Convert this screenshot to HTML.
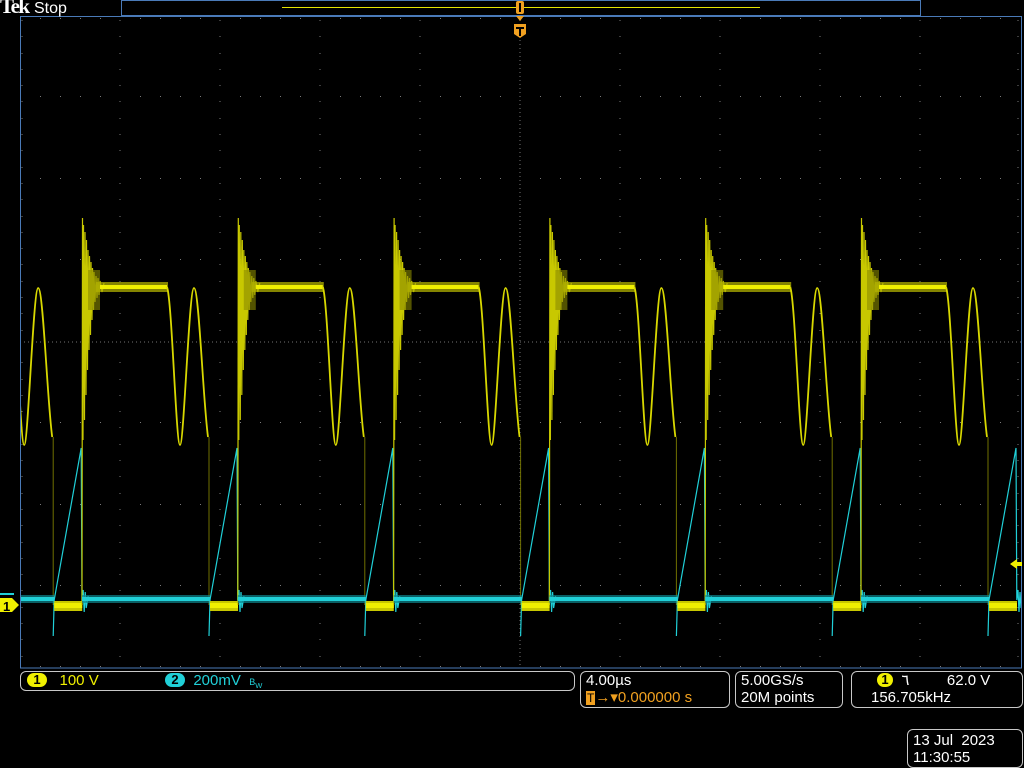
<!DOCTYPE html>
<html><head><meta charset="utf-8"><style>
html,body{margin:0;padding:0;background:#000;width:1024px;height:768px;overflow:hidden;font-family:"Liberation Sans",sans-serif}
.t{position:absolute;font-size:15px;white-space:pre;line-height:17px}
.box{position:absolute;border:1px solid #c8c8c8;border-radius:6px}
.badge{display:inline-block;width:20px;height:14px;border-radius:7px;color:#000;text-align:center;font-size:13px;line-height:14px;font-weight:bold;vertical-align:1px}
</style></head><body>
<svg width="1024" height="768" style="position:absolute;left:0;top:0">
<defs>
<clipPath id="c"><rect x="21" y="17" width="1000" height="651"/></clipPath>
<g id="per">
 <polyline fill="none" stroke="#c8c800" stroke-width="1.2" points="0,605 0.5,218 1,440 1.5,225 2.5,420 3,232 4,395 4.5,240 5.5,370 6,250 7,350 7.5,256 8.5,335 9,262 10,320 10.5,268 11.5,310 12,272 13,302 14,276 15,298 16,278 17,295 18,281 20,292 22,283"/>
 <rect x="6" y="270" width="12" height="40" fill="#8a8a00" opacity="0.6"/>
 <rect x="14" y="282" width="72" height="10" fill="#b0b000" opacity="0.75"/>
 <rect x="18" y="285" width="67" height="4" fill="#f0f000"/>
 <path d="M85,287 C90,300 94,445 98,445 C102,445 107,288 112,288 C117,288 121,400 126,437" fill="none" stroke="#d8d800" stroke-width="1.8"/>
 <line x1="127" y1="437" x2="127" y2="605" stroke="#707000" stroke-width="1"/>
 <rect x="0" y="595" width="128" height="8" fill="#0e8890" opacity="0.7"/>
 <rect x="0" y="597" width="128" height="4" fill="#20d0d8"/>
 <polyline fill="none" stroke="#20d0d8" stroke-width="1.2" points="127,636 128,600 155,448 155.8,600 157,590 158,612 159,592 160,608 162,596"/>
 <rect x="128" y="601" width="28" height="10" fill="#c8c800"/>
 <rect x="128" y="603" width="28" height="5" fill="#f0f000"/>
</g>
</defs>
<g stroke="#808080" stroke-width="1" stroke-dasharray="1 3" opacity="0.9">
 <line x1="20" y1="342" x2="1021" y2="342"/>
 <line x1="520" y1="16" x2="520" y2="668"/>
</g>
<g fill="#7a7a7a">
 <path id="vd" d="M119.5,20h1v1h-1zM119.5,36h1v1h-1zM119.5,53h1v1h-1zM119.5,69h1v1h-1zM119.5,85h1v1h-1zM119.5,101h1v1h-1zM119.5,118h1v1h-1zM119.5,134h1v1h-1zM119.5,150h1v1h-1zM119.5,167h1v1h-1zM119.5,183h1v1h-1zM119.5,199h1v1h-1zM119.5,216h1v1h-1zM119.5,232h1v1h-1zM119.5,248h1v1h-1zM119.5,264h1v1h-1zM119.5,281h1v1h-1zM119.5,297h1v1h-1zM119.5,313h1v1h-1zM119.5,330h1v1h-1zM119.5,362h1v1h-1zM119.5,379h1v1h-1zM119.5,395h1v1h-1zM119.5,411h1v1h-1zM119.5,427h1v1h-1zM119.5,444h1v1h-1zM119.5,460h1v1h-1zM119.5,476h1v1h-1zM119.5,493h1v1h-1zM119.5,509h1v1h-1zM119.5,525h1v1h-1zM119.5,542h1v1h-1zM119.5,558h1v1h-1zM119.5,574h1v1h-1zM119.5,590h1v1h-1zM119.5,607h1v1h-1zM119.5,623h1v1h-1zM119.5,639h1v1h-1zM119.5,656h1v1h-1z"/>
 <use href="#vd" x="100"/><use href="#vd" x="200"/><use href="#vd" x="300"/><use href="#vd" x="500"/><use href="#vd" x="600"/><use href="#vd" x="700"/><use href="#vd" x="800"/><use href="#vd" x="-98"/><use href="#vd" x="898"/>
 <path id="hd" d="M40,96h1v1h-1zM60,96h1v1h-1zM80,96h1v1h-1zM100,96h1v1h-1zM140,96h1v1h-1zM160,96h1v1h-1zM180,96h1v1h-1zM200,96h1v1h-1zM240,96h1v1h-1zM260,96h1v1h-1zM280,96h1v1h-1zM300,96h1v1h-1zM340,96h1v1h-1zM360,96h1v1h-1zM380,96h1v1h-1zM400,96h1v1h-1zM440,96h1v1h-1zM460,96h1v1h-1zM480,96h1v1h-1zM500,96h1v1h-1zM540,96h1v1h-1zM560,96h1v1h-1zM580,96h1v1h-1zM600,96h1v1h-1zM640,96h1v1h-1zM660,96h1v1h-1zM680,96h1v1h-1zM700,96h1v1h-1zM740,96h1v1h-1zM760,96h1v1h-1zM780,96h1v1h-1zM800,96h1v1h-1zM840,96h1v1h-1zM860,96h1v1h-1zM880,96h1v1h-1zM900,96h1v1h-1zM940,96h1v1h-1zM960,96h1v1h-1zM980,96h1v1h-1zM1000,96h1v1h-1z"/>
 <use href="#hd" y="-78"/><use href="#hd" y="82"/><use href="#hd" y="163"/><use href="#hd" y="326"/><use href="#hd" y="408"/><use href="#hd" y="489"/><use href="#hd" y="570"/>
</g>
<g clip-path="url(#c)">
 <use href="#per" x="-73.8"/><use href="#per" x="82"/><use href="#per" x="237.8"/><use href="#per" x="393.6"/><use href="#per" x="549.4"/><use href="#per" x="705.2"/><use href="#per" x="861"/>
</g>
<rect x="20.5" y="16.5" width="1001" height="651.5" fill="none" stroke="#4a7ab8" stroke-width="1"/>
<rect x="121.5" y="0.5" width="799" height="15" fill="#000" stroke="#4a7ab8"/>
<line x1="282" y1="7.5" x2="760" y2="7.5" stroke="#e6e600"/>
<rect x="516" y="1" width="8" height="13" fill="#f0a020" rx="2"/>
<rect x="519" y="3" width="2" height="9" fill="#000"/>
<path d="M516,16h8l-4,5z" fill="#f0a020"/>
<path d="M514,24h12v10l-6,4l-6,-4z" fill="#f0a020"/>
<path d="M516,27h8v2h-3v7h-2v-7h-3z" fill="#000"/>
<path d="M0,598h12l7,7l-7,7h-12z" fill="#f0f000"/>
<path d="M0,594h14" stroke="#20d0d8" stroke-width="2"/>
<text x="3" y="611" font-family="Liberation Sans" font-size="13" font-weight="bold" fill="#000">1</text>
<path d="M1010,564l7,-5v3h5v4h-5v3z" fill="#f0f000"/>
</svg>
<div class="t" style="left:0;top:-2px;color:#fff;font-family:'Liberation Serif',serif;font-size:21px;font-weight:bold;letter-spacing:-1.5px">Tek</div>
<div class="t" style="left:34px;top:0;color:#fff;font-size:16px">Stop</div>

<div class="box" style="left:20px;top:671px;width:553px;height:18px"></div>
<div class="t" style="left:27px;top:672px;color:#f0f000"><span class="badge" style="background:#f0f000">1</span>   100 V</div>
<div class="t" style="left:165px;top:672px;color:#20d0d8"><span class="badge" style="background:#20d0d8">2</span>  200mV  <span style="font-size:9px">B<sub>W</sub></span></div>

<div class="box" style="left:580px;top:671px;width:148px;height:35px"></div>
<div class="t" style="left:586px;top:672px;color:#fff">4.00µs</div>
<div class="t" style="left:586px;top:689px;color:#f0a020"><span style="background:#f0a020;color:#000;font-size:12px;padding:0 1px">T</span>→▾0.000000 s</div>

<div class="box" style="left:735px;top:671px;width:106px;height:35px"></div>
<div class="t" style="left:741px;top:672px;color:#fff">5.00GS/s</div>
<div class="t" style="left:741px;top:689px;color:#fff">20M points</div>

<div class="box" style="left:851px;top:671px;width:170px;height:35px"></div>
<div class="t" style="left:877px;top:672px;color:#fff"><span class="badge" style="background:#f0f000;width:16px">1</span>  ٦         62.0 V</div>
<div class="t" style="left:871px;top:689px;color:#fff">156.705kHz</div>

<div class="box" style="left:907px;top:729px;width:114px;height:37px"></div>
<div class="t" style="left:913px;top:732px;color:#fff">13 Jul  2023</div>
<div class="t" style="left:913px;top:749px;color:#fff">11:30:55</div>
</body></html>
